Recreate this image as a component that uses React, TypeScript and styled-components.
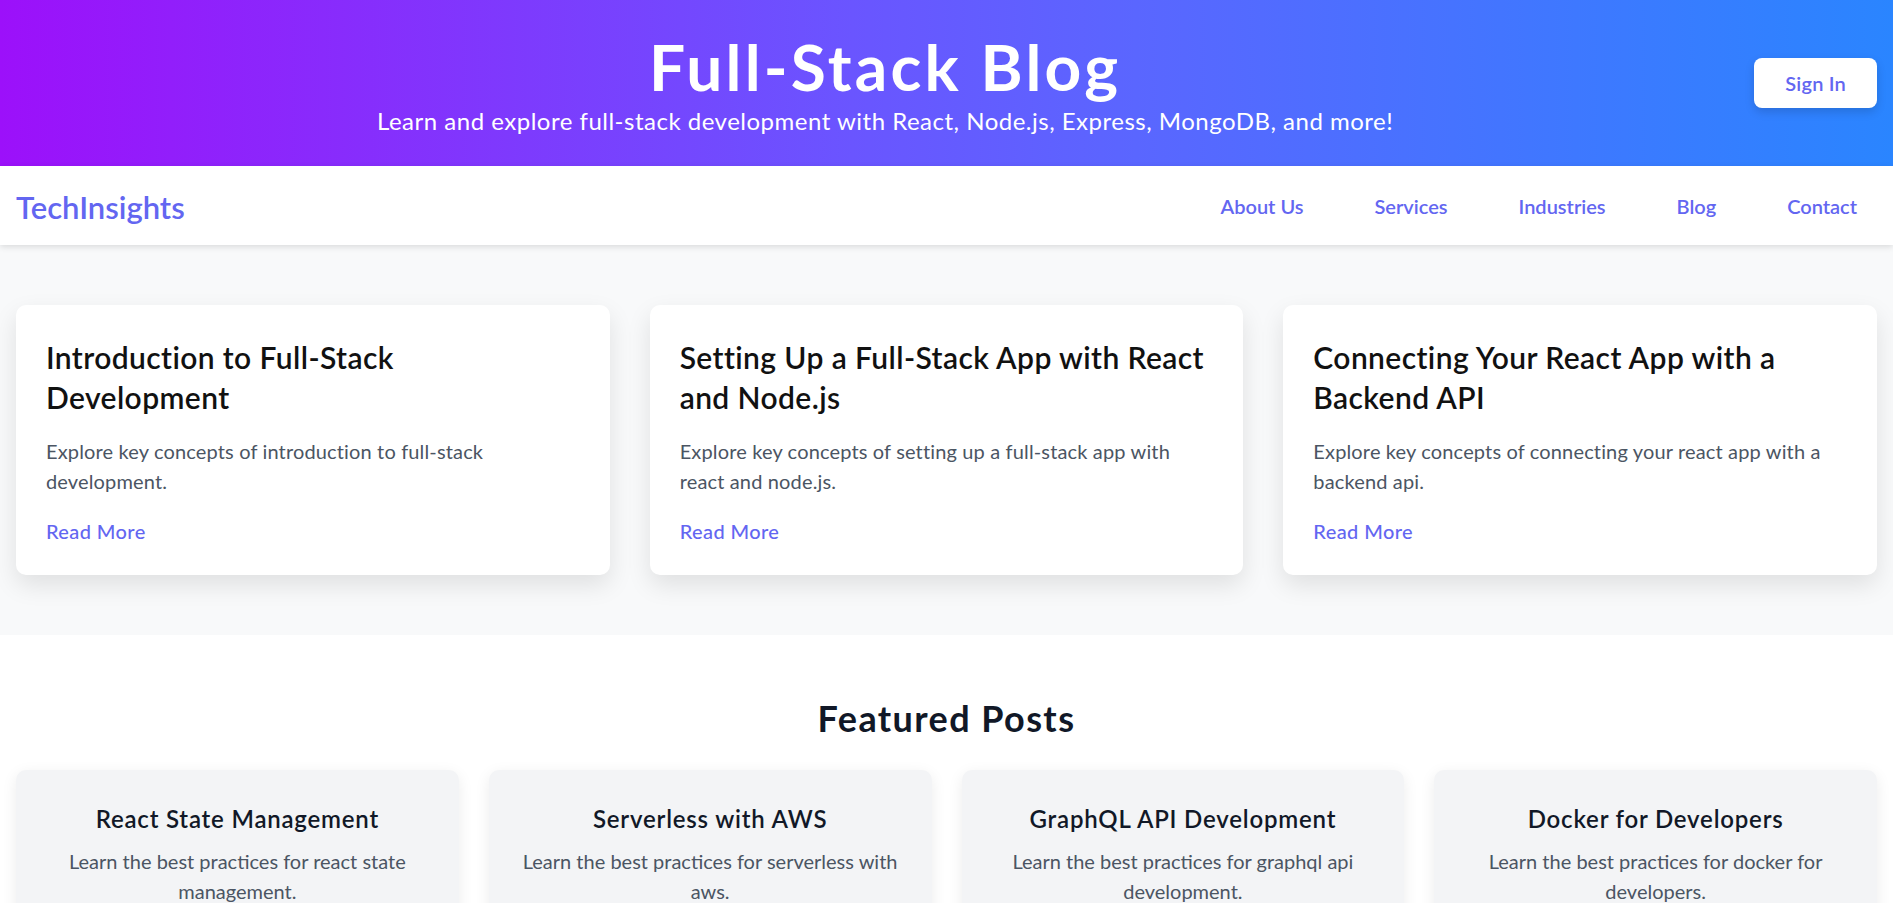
import React from "react";
import styled, { createGlobalStyle } from "styled-components";

const GlobalStyle = createGlobalStyle`
  html { scrollbar-width: none; }
  html::-webkit-scrollbar, body::-webkit-scrollbar { display: none; }
  *, *::before, *::after { box-sizing: border-box; }
  body {
    margin: 0;
    font-family: Lato, "Open Sans", sans-serif;
    background: #ffffff;
    color: #111111;
  }
`;

const Banner = styled.header`
  display: flex;
  align-items: center;
  height: 166px;
  padding: 0 16px;
  background: linear-gradient(90deg, #9c10fa 0%, #6a55ff 45%, #5a66ff 60%, #2a85ff 100%);
  color: #ffffff;
`;

const BannerText = styled.div`
  flex: 1;
  text-align: center;
  padding-bottom: 4px;
`;

const Title = styled.h1`
  margin: 0;
  font-size: 64px;
  line-height: 79px;
  font-weight: 700;
  letter-spacing: 3.2px;
`;

const Subtitle = styled.p`
  margin: 0;
  font-size: 24px;
  line-height: 29px;
  font-weight: 400;
  letter-spacing: 0.5px;
`;

const SignInButton = styled.button`
  flex: none;
  height: 50px;
  padding: 0 31px;
  border: none;
  border-radius: 8px;
  background: #ffffff;
  color: #6366f1;
  font-family: inherit;
  font-size: 20px;
  font-weight: 600;
  letter-spacing: 0.2px;
  box-shadow: 0 4px 10px rgba(0, 0, 0, 0.15);
  cursor: pointer;
`;

const Nav = styled.nav`
  position: relative;
  z-index: 1;
  display: flex;
  align-items: center;
  justify-content: space-between;
  height: 79px;
  padding: 0 16px;
  background: #ffffff;
  box-shadow: 0 2px 6px rgba(0, 0, 0, 0.12);
`;

const Brand = styled.div`
  padding-top: 2px;
  font-size: 31px;
  line-height: 38px;
  font-weight: 600;
  color: #6366f1;
`;

const NavLinks = styled.div`
  display: flex;
  gap: 31px;
  padding-top: 1px;
`;

const NavLink = styled.a`
  padding: 0 20px;
  font-size: 20px;
  line-height: 27px;
  font-weight: 600;
  color: #6366f1;
  text-decoration: none;
`;

const PostsSection = styled.section`
  padding: 60px 16px;
  background: #f8f9fa;
`;

const PostsGrid = styled.div`
  display: grid;
  grid-template-columns: repeat(3, 1fr);
  gap: 40px;
`;

const PostCard = styled.article`
  padding: 32px 30px 30px;
  border-radius: 10px;
  background: #ffffff;
  box-shadow: 0 10px 25px rgba(0, 0, 0, 0.1);
`;

const PostTitle = styled.h2`
  margin: 0 0 19px;
  font-size: 30px;
  line-height: 40px;
  font-weight: 600;
  letter-spacing: 0.4px;
  color: #111111;
`;

const PostDesc = styled.p`
  margin: 0 0 21px;
  font-size: 20px;
  line-height: 30px;
  letter-spacing: 0.15px;
  color: #4b5563;
`;

const ReadMore = styled.a`
  display: inline-block;
  font-size: 20px;
  line-height: 28px;
  font-weight: 500;
  letter-spacing: 0.4px;
  color: #6366f1;
  text-decoration: none;
`;

const FeaturedSection = styled.section`
  padding: 62px 16px 60px;
  background: #ffffff;
`;

const FeaturedHeading = styled.h2`
  margin: 0 0 30px;
  text-align: center;
  font-size: 36px;
  line-height: 43px;
  font-weight: 700;
  letter-spacing: 1.4px;
  color: #111827;
`;

const FeaturedGrid = styled.div`
  display: grid;
  grid-template-columns: repeat(4, 1fr);
  gap: 30px;
`;

const FeaturedCard = styled.article`
  padding: 33px 30px 30px;
  border-radius: 10px;
  background: #f3f4f6;
  text-align: center;
  box-shadow: 0 4px 15px rgba(0, 0, 0, 0.08);
`;

const FeaturedTitle = styled.h3`
  margin: 0 0 11px;
  font-size: 24px;
  line-height: 32px;
  font-weight: 600;
  letter-spacing: 0.8px;
  color: #111827;
`;

const FeaturedDesc = styled.p`
  margin: 0;
  font-size: 20px;
  line-height: 30px;
  color: #4b5563;
`;

const navItems = ["About Us", "Services", "Industries", "Blog", "Contact"];

const posts = [
  "Introduction to Full-Stack Development",
  "Setting Up a Full-Stack App with React and Node.js",
  "Connecting Your React App with a Backend API",
];

const featured = [
  "React State Management",
  "Serverless with AWS",
  "GraphQL API Development",
  "Docker for Developers",
];

export default function App() {
  return (
    <>
      <GlobalStyle />
      <Banner>
        <BannerText>
          <Title>Full-Stack Blog</Title>
          <Subtitle>
            Learn and explore full-stack development with React, Node.js, Express, MongoDB, and more!
          </Subtitle>
        </BannerText>
        <SignInButton>Sign In</SignInButton>
      </Banner>
      <Nav>
        <Brand>TechInsights</Brand>
        <NavLinks>
          {navItems.map((item) => (
            <NavLink key={item} href="#">
              {item}
            </NavLink>
          ))}
        </NavLinks>
      </Nav>
      <PostsSection>
        <PostsGrid>
          {posts.map((title) => (
            <PostCard key={title}>
              <PostTitle>{title}</PostTitle>
              <PostDesc>{`Explore key concepts of ${title.toLowerCase()}.`}</PostDesc>
              <ReadMore href="#">Read More</ReadMore>
            </PostCard>
          ))}
        </PostsGrid>
      </PostsSection>
      <FeaturedSection>
        <FeaturedHeading>Featured Posts</FeaturedHeading>
        <FeaturedGrid>
          {featured.map((title) => (
            <FeaturedCard key={title}>
              <FeaturedTitle>{title}</FeaturedTitle>
              <FeaturedDesc>{`Learn the best practices for ${title.toLowerCase()}.`}</FeaturedDesc>
            </FeaturedCard>
          ))}
        </FeaturedGrid>
      </FeaturedSection>
    </>
  );
}
